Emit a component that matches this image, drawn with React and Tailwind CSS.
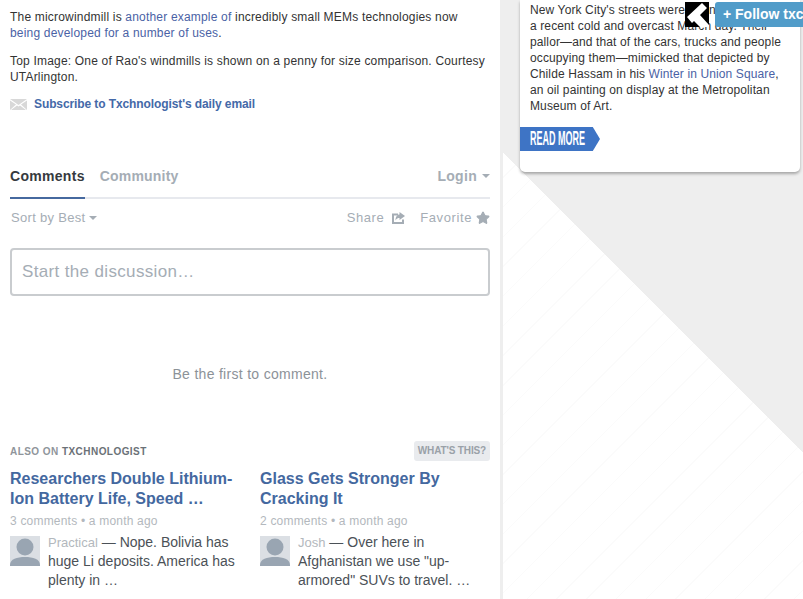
import { Star } from "lucide-react";

function Avatar() {
  return (
    <svg viewBox="0 0 30 30" className="h-[30px] w-[30px] shrink-0 bg-[#dbdfe4]">
      <circle cx="15" cy="11" r="8.5" fill="#99a5b2" />
      <path d="M0 29c0-6 7-8 15-8s15 2 15 8v1H0z" fill="#99a5b2" />
    </svg>
  );
}

function Recommendation({ title, meta, author, excerpt }) {
  return (
    <div className="w-[230px]">
      <h3 className="text-[16px] font-bold leading-[20px] tracking-normal text-[#44689f]">{title}</h3>
      <p className="mt-[4px] text-[12px] leading-[16px] tracking-[0.2px] text-[#b3b8bd]">{meta}</p>
      <div className="mt-[7px] flex gap-2">
        <Avatar />
        <p className="-mt-[3px] text-[14px] leading-[19px] tracking-normal text-[#4b5157]">
          <span className="text-[13px] text-[#b3b8bd]">{author}</span> — {excerpt}
        </p>
      </div>
    </div>
  );
}

export default function App() {
  return (
    <div className="relative flex h-[599px] w-[803px] overflow-hidden bg-white font-['Liberation_Sans',Arial,sans-serif]">
      <main className="w-[500px] shrink-0 px-[10px] pt-[9px] text-[12px] leading-[16px] tracking-[0.19px] text-[#333]">
        <p>
          The microwindmill is <a className="text-[#4a62a5]">another example of</a> incredibly small MEMs technologies now{" "}
          <a className="text-[#4a62a5]">being developed for a number of uses</a>.
        </p>
        <p className="mt-3">Top Image: One of Rao's windmills is shown on a penny for size comparison. Courtesy UTArlington.</p>
        <div className="mt-[11px] flex items-center gap-[7px]">
          <svg viewBox="0 0 17 11" className="h-[11px] w-[17px]">
            <path d="M0 0h17L8.500 6z" fill="#d8d8d8" />
            <path d="M0 1.500V11l6-5.500zM17 1.500V11l-6-5.500zM1 11h15L10 6.500 8.500 7.500 7 6.500z" fill="#d8d8d8" />
          </svg>
          <a className="font-bold tracking-[-0.1px] text-[#4469a8]">Subscribe to Txchnologist's daily email</a>
        </div>

        <section className="mt-[54px]">
          <div className="flex h-[33px] items-start border-b-2 border-[#e7e9ee] text-[14px] font-bold leading-[20px]">
            <span className="-mb-[2px] h-[33px] border-b-2 border-[#46699f] tracking-[0.3px] text-[#363a3e]">Comments</span>
            <span className="ml-[15px] tracking-[0.2px] text-[#a5adb5]">Community</span>
            <span className="ml-auto flex items-center gap-[5px] tracking-[0.3px] text-[#a5adb5]">
              Login
              <span className="border-x-[4px] border-t-[4px] border-x-transparent border-t-[#a5adb5]" />
            </span>
          </div>

          <div className="mt-[10px] flex h-[18px] items-center pl-px text-[13px] tracking-[0.3px] text-[#a5adb5]">
            <span>Sort by Best</span>
            <span className="ml-[4px] border-x-[4px] border-t-[4px] border-x-transparent border-t-[#a5adb5]" />
            <span className="ml-auto tracking-[0.55px]">Share</span>
            <svg viewBox="0 0 14 14" className="ml-[7px] h-[14px] w-[14px]" fill="#a5adb5">
              <path d="M1 2.500h6v2H3v6.500h8V8.500h2V13H1z" />
              <path d="M8.500 1 14 5l-5.500 4V7C7 7 5.500 7.500 4.500 9.500 4.500 6 6 3.500 8.500 3.500z" />
            </svg>
            <span className="ml-[15px] tracking-[0.6px]">Favorite</span>
            <Star className="ml-[4px] h-[14px] w-[14px]" fill="#a5adb5" stroke="#a5adb5" />
          </div>

          <div className="mt-[21px] flex h-[48px] items-center rounded-[4px] border-2 border-[#c9cccf] pl-[10px] text-[17px] tracking-[0.35px] text-[#a5adb5]">
            Start the discussion…
          </div>

          <p className="mt-[68px] text-center text-[14px] leading-[20px] tracking-[0.3px] text-[#8c9298]">Be the first to comment.</p>

          <div className="mt-[57px] flex h-[20px] items-center justify-between text-[10px] font-bold tracking-[0.45px] text-[#8f959b]">
            <span className="pt-[2px]">
              ALSO ON <span className="text-[#6b7177]">TXCHNOLOGIST</span>
            </span>
            <span className="rounded-[3px] bg-[#e9ebee] px-[4px] leading-[20px] tracking-[-0.15px] text-[#9aa1a8]">WHAT'S THIS?</span>
          </div>

          <div className="mt-[8px] flex gap-5">
            <Recommendation
              title="Researchers Double Lithium-Ion Battery Life, Speed …"
              meta="3 comments • a month ago"
              author="Practical"
              excerpt="Nope. Bolivia has huge Li deposits. America has plenty in …"
            />
            <Recommendation
              title="Glass Gets Stronger By Cracking It"
              meta="2 comments • a month ago"
              author="Josh"
              excerpt={'Over here in Afghanistan we use "up-armored" SUVs to travel. …'}
            />
          </div>
        </section>
      </main>

      <aside className="h-full flex-1 border-l-[3px] border-[#eeeeee] bg-[linear-gradient(45deg,transparent_316px,#eeeeee_316px),repeating-linear-gradient(135deg,#ffffff_0,#ffffff_20px,#fbfbfb_20px,#fbfbfb_21px)] pl-[17px]">
        <div className="h-[172px] w-[280px] rounded-b-[5px] bg-white pt-[2px] text-[12px] leading-[16px] tracking-[0.12px] text-[#333] shadow-[0_2px_3px_rgba(0,0,0,0.3)]">
          <p className="whitespace-nowrap px-[10px]">
            New York City's streets were drained of color on
            <br />
            a recent cold and overcast March day. Their
            <br />
            pallor—and that of the cars, trucks and people
            <br />
            occupying them—mimicked that depicted by
            <br />
            Childe Hassam in his <a className="text-[#4a62a5]">Winter in Union Square</a>,
            <br />
            an oil painting on display at the Metropolitan
            <br />
            Museum of Art.
          </p>
          <div className="mt-[13px] flex h-[24px] w-[80px] items-center overflow-hidden bg-[#3e74c5] pb-[3px] pl-[10px] [clip-path:polygon(0_0,91%_0,100%_50%,91%_100%,0_100%)]">
            <span className="origin-left scale-x-[0.45] whitespace-nowrap text-[20px] font-bold tracking-normal text-white">READ MORE</span>
          </div>
        </div>
      </aside>

      <div className="absolute left-[685px] top-[2px] h-[25px] w-[24px]">
        <svg viewBox="0 0 24 25" className="h-full w-full">
          <path d="M0 0h24v25H0z" fill="#000" />
          <path d="M2 15 17 1l5 5-7 7 9 10v2h-9l-6-6-2 2z" fill="#fff" />
        </svg>
      </div>
      <div className="absolute left-[715px] top-[2px] flex h-[25px] w-[88px] items-center overflow-hidden whitespace-nowrap rounded-l-[3px] bg-[#519cc9] pl-[8px] text-[14px] font-bold text-white">
        + Follow txchnologist
      </div>
    </div>
  );
}
